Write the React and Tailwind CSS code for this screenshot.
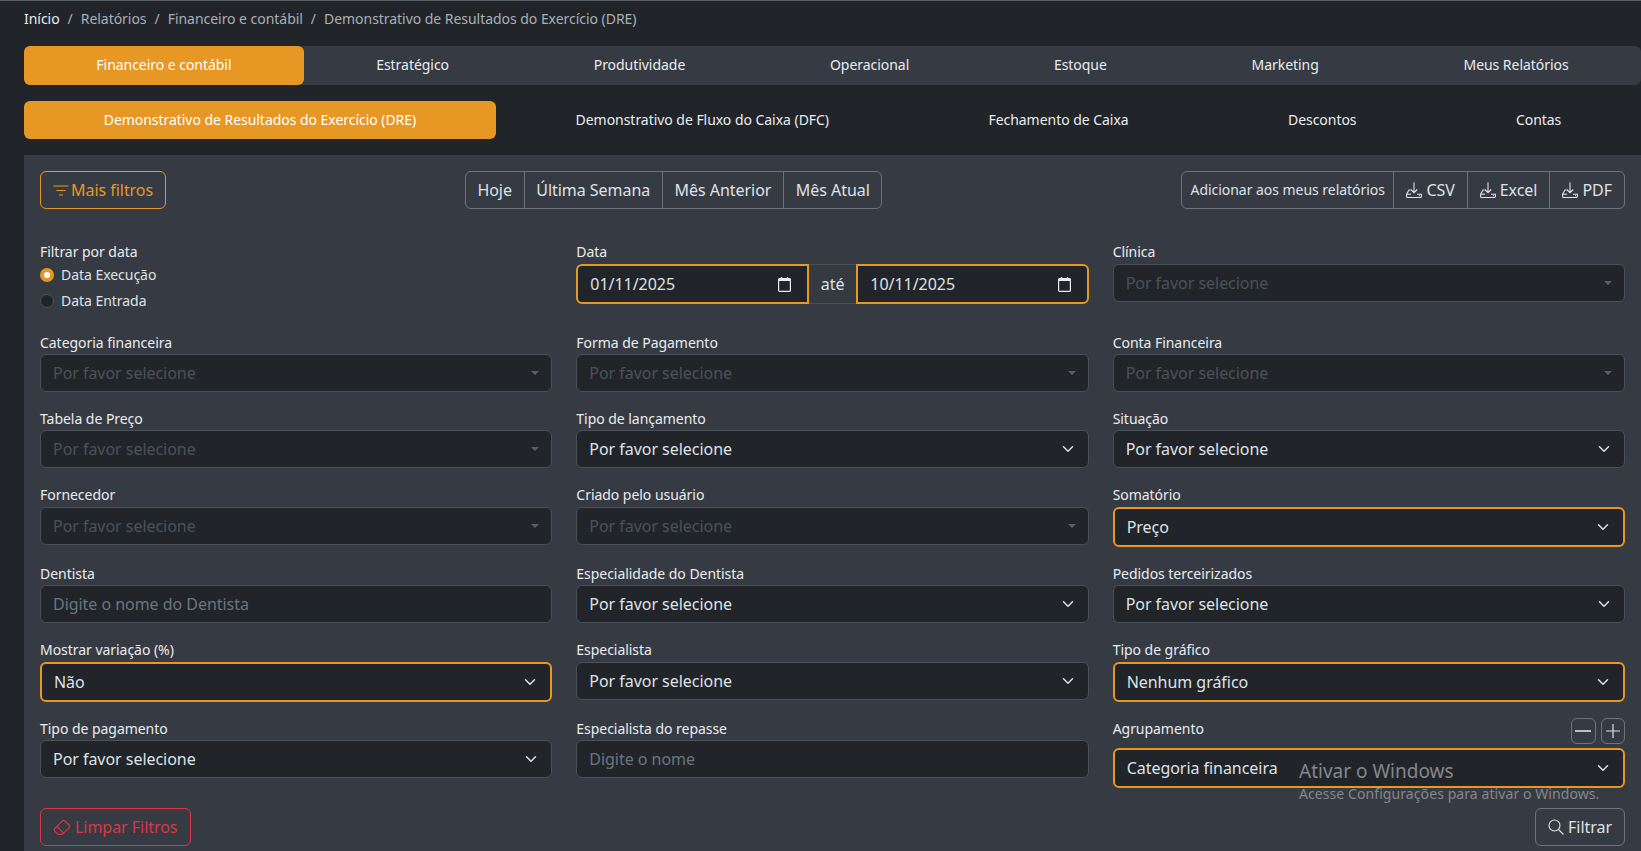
import { BsEraser } from 'react-icons/bs';

const Chevron = () => (
  <svg viewBox="0 0 16 16" className="w-3 h-3 mr-[2px] shrink-0" fill="none" stroke="#dee2e6" strokeWidth="2" strokeLinecap="round" strokeLinejoin="round">
    <path d="m2 5 6 6 6-6" />
  </svg>
);

const Caret = () => (
  <svg viewBox="0 0 8 4" className="w-2 h-1 shrink-0" fill="#5b6068">
    <path d="M0 0h8L4 4z" />
  </svg>
);

const CalendarIcon = () => (
  <svg viewBox="0 0 13 15" className="w-[13px] h-[15px]" fill="none">
    <path d="M3.5 0v2M9.5 0v2" stroke="#e9ecef" strokeWidth="1.4" />
    <rect x="0.6" y="1.6" width="11.8" height="12.8" rx="1" stroke="#e9ecef" strokeWidth="1.2" />
    <rect x="0.6" y="1.6" width="11.8" height="2.4" fill="#e9ecef" />
  </svg>
);

const DownloadIcon = () => (
  <svg viewBox="0 0 16 16" className="w-4 h-4 shrink-0" fill="none" stroke="#dee2e6" strokeWidth="1.1">
    <path d="M8 .5v10M4.8 7.5 8 10.7l3.2-3.2" />
    <path d="M4.5 8H3L.6 12.2v2.3c0 .6.4 1 1 1h12.8c.6 0 1-.4 1-1v-2.3H11" />
    <path d="M.8 12.2H5" />
    <path d="M13 13.6h.8" />
  </svg>
);

const FilterIcon = () => (
  <svg viewBox="0 0 16 16" className="w-4 h-4 shrink-0" fill="#e79723">
    <path d="M.5 3.5h15v1H.5zM3.5 8h9v1h-9zM6 12.5h4v1H6z" />
  </svg>
);

const SearchIcon = () => (
  <svg viewBox="0 0 16 16" className="w-4 h-4" fill="none" stroke="#dee2e6" strokeWidth="1.1">
    <circle cx="6.5" cy="6.5" r="5.5" />
    <path d="m10.5 10.5 5 5" />
  </svg>
);

const RadioRow = ({ label, checked }) => (
  <div className="flex items-center gap-[7px] h-[26px]">
    {checked ? (
      <span className="w-[14px] h-[14px] rounded-full bg-[#e79723] flex items-center justify-center">
        <span className="w-[6px] h-[6px] rounded-full bg-white" />
      </span>
    ) : (
      <span className="w-[14px] h-[14px] rounded-full bg-[#212529] border border-[#495057]" />
    )}
    <span className="text-sm text-[#dee2e6]">{label}</span>
  </div>
);

const Label = ({ children, top }) => (
  <div className={top ? 'h-[22px] text-sm leading-[20px] text-[#e9ecef]' : 'h-[22px] text-sm leading-[22px] text-[#e9ecef]'}>
    {children}
  </div>
);

// select desabilitado, estilo select2
const DisabledSelect = () => (
  <div className="h-[38px] px-3 flex items-center justify-between rounded-md bg-[#212529] border border-[#495057]">
    <span className="text-base text-[#4c5157]">Por favor selecione</span>
    <Caret />
  </div>
);

const Select = ({ value = 'Por favor selecione', active }) => (
  <div className={active
    ? 'h-10 px-3 flex items-center justify-between rounded-md bg-[#212529] border-2 border-[#e79723]'
    : 'h-[38px] px-3 flex items-center justify-between rounded-md bg-[#212529] border border-[#495057]'}>
    <span className="text-base text-[#dee2e6]">{value}</span>
    <Chevron />
  </div>
);

const TextInput = ({ placeholder }) => (
  <div className="h-[38px] px-3 flex items-center rounded-md bg-[#212529] border border-[#495057]">
    <span className="text-base text-[#6c757d]">{placeholder}</span>
  </div>
);

const Field = ({ label, top, children }) => (
  <div>
    <Label top={top}>{label}</Label>
    {children}
  </div>
);

const GroupButton = ({ children, className }) => (
  <div className={`h-full flex items-center gap-1 border-l border-[#6c757d] first:border-l-0 text-[#dee2e6] ${className}`}>
    {children}
  </div>
);

const mainTabs = ['Estratégico', 'Produtividade', 'Operacional', 'Estoque', 'Marketing', 'Meus Relatórios'];
const subTabs = ['Demonstrativo de Fluxo do Caixa (DFC)', 'Fechamento de Caixa', 'Descontos', 'Contas'];

export default function App() {
  return (
    <div className="relative h-[851px] overflow-hidden bg-[#212529] border-t border-[#5a5f66] tracking-[-0.04px] font-['Noto_Sans',sans-serif]">
      <nav className="h-[36px] pl-6 flex items-center gap-2 text-sm text-[#a9afb6]">
        <span className="text-[#e9ecef]">Início</span>
        <span>/</span>
        <span>Relatórios</span>
        <span>/</span>
        <span>Financeiro e contábil</span>
        <span>/</span>
        <span>Demonstrativo de Resultados do Exercício (DRE)</span>
      </nav>

      <div className="ml-6 mt-[9px] h-[39px] flex rounded-md bg-[#363b43] text-sm text-[#e9ecef]">
        <div className="flex-auto flex items-center justify-center rounded-md bg-[#e79723] text-white px-4 pb-[2px]">Financeiro e contábil</div>
        {mainTabs.map((tab) => (
          <div key={tab} className="flex-auto flex items-center justify-center px-4 pb-[2px]">{tab}</div>
        ))}
      </div>

      <div className="ml-6 mt-4 h-[38px] flex text-sm text-[#e9ecef]">
        <div className="flex-auto flex items-center justify-center rounded-md bg-[#e79723] text-white px-4">Demonstrativo de Resultados do Exercício (DRE)</div>
        {subTabs.map((tab) => (
          <div key={tab} className="flex-auto flex items-center justify-center px-4">{tab}</div>
        ))}
      </div>

      <div className="ml-6 mt-4 pl-4 pr-4 pt-4 h-[700px] bg-[#363b43]">
        <div className="flex items-center justify-between h-[38px]">
          <div className="flex items-center gap-[2px] h-[38px] px-3 rounded-md border border-[#e79723] text-base text-[#e79723]">
            <FilterIcon />
            Mais filtros
          </div>
          <div className="flex h-[38px] rounded-md border border-[#6c757d] text-base">
            <GroupButton className="px-[11.7px]">Hoje</GroupButton>
            <GroupButton className="px-[11.7px]">Última Semana</GroupButton>
            <GroupButton className="px-[11.7px]">Mês Anterior</GroupButton>
            <GroupButton className="px-[11.7px]">Mês Atual</GroupButton>
          </div>
          <div className="flex h-[38px] rounded-md border border-[#6c757d] text-base">
            <GroupButton className="px-[8.5px] text-sm">Adicionar aos meus relatórios</GroupButton>
            <GroupButton className="px-3"><DownloadIcon />CSV</GroupButton>
            <GroupButton className="px-3"><DownloadIcon />Excel</GroupButton>
            <GroupButton className="px-3"><DownloadIcon />PDF</GroupButton>
          </div>
        </div>

        <div className="mt-[33px] grid grid-cols-3 grid-rows-[74px_60px_61px_62px_61px_62px_auto] gap-x-6 gap-y-4 items-start">
          <div>
            <Label top>Filtrar por data</Label>
            <div className="-mt-[2px]">
              <RadioRow label="Data Execução" checked />
              <RadioRow label="Data Entrada" />
            </div>
          </div>
          <Field label="Data" top>
            <div className="flex h-10">
              <div className="w-[232.5px] flex items-center justify-between pl-3 pr-4 rounded-l-md bg-[#212529] border-2 border-[#e79723] text-base text-[#dee2e6]">
                01/11/2025
                <CalendarIcon />
              </div>
              <div className="w-[47.5px] flex items-center justify-center bg-[#343a40] border-y border-[#495057] text-base text-[#dee2e6]">até</div>
              <div className="flex-1 flex items-center justify-between pl-3 pr-4 rounded-r-md bg-[#212529] border-2 border-[#e79723] text-base text-[#dee2e6]">
                10/11/2025
                <CalendarIcon />
              </div>
            </div>
          </Field>
          <Field label="Clínica" top><DisabledSelect /></Field>

          <Field label="Categoria financeira"><DisabledSelect /></Field>
          <Field label="Forma de Pagamento"><DisabledSelect /></Field>
          <Field label="Conta Financeira"><DisabledSelect /></Field>

          <Field label="Tabela de Preço"><DisabledSelect /></Field>
          <Field label="Tipo de lançamento"><Select /></Field>
          <Field label="Situação"><Select /></Field>

          <Field label="Fornecedor" top><DisabledSelect /></Field>
          <Field label="Criado pelo usuário" top><DisabledSelect /></Field>
          <Field label="Somatório" top><Select value="Preço" active /></Field>

          <Field label="Dentista"><TextInput placeholder="Digite o nome do Dentista" /></Field>
          <Field label="Especialidade do Dentista"><Select /></Field>
          <Field label="Pedidos terceirizados"><Select /></Field>

          <Field label="Mostrar variação (%)" top><Select value="Não" active /></Field>
          <Field label="Especialista" top><Select /></Field>
          <Field label="Tipo de gráfico" top><Select value="Nenhum gráfico" active /></Field>

          <Field label="Tipo de pagamento"><Select /></Field>
          <Field label="Especialista do repasse"><TextInput placeholder="Digite o nome" /></Field>
          <div>
            <div className="flex items-start justify-between h-[30px]">
              <span className="text-sm leading-[22px] text-[#e9ecef]">Agrupamento</span>
              <div className="flex gap-[5px]">
                <div className="w-[25px] h-[26px] flex items-center justify-center rounded-md border border-[#6c757d]">
                  <svg viewBox="0 0 16 16" className="w-4 h-4" stroke="#dee2e6" strokeWidth="1.6"><path d="M0 8h16" /></svg>
                </div>
                <div className="w-[24px] h-[26px] flex items-center justify-center rounded-md border border-[#6c757d]">
                  <svg viewBox="0 0 16 16" className="w-4 h-4" stroke="#dee2e6" strokeWidth="1.2"><path d="M1 8h14M8 1v14" /></svg>
                </div>
              </div>
            </div>
            <Select value="Categoria financeira" active />
          </div>
        </div>

        <div className="mt-[20px] flex items-center justify-between">
          <div className="flex items-center gap-1 h-[38px] pl-3 pr-[13px] rounded-md border border-[#dc3545] text-base text-[#dc3545]">
            <BsEraser className="w-[18px] h-[18px]" />
            Limpar Filtros
          </div>
          <div className="flex items-center gap-1 h-[38px] px-3 rounded-md border border-[#6c757d] text-base text-[#dee2e6]">
            <SearchIcon />
            Filtrar
          </div>
        </div>
      </div>

      {/* marca d'agua do Windows */}
      <div className="absolute left-[1299px] top-[757px] text-[#84878c] tracking-normal pointer-events-none">
        <div className="text-[19px] leading-[26px]">Ativar o Windows</div>
        <div className="text-[14px] leading-[19px] tracking-[0.08px]">Acesse Configurações para ativar o Windows.</div>
      </div>
    </div>
  );
}
